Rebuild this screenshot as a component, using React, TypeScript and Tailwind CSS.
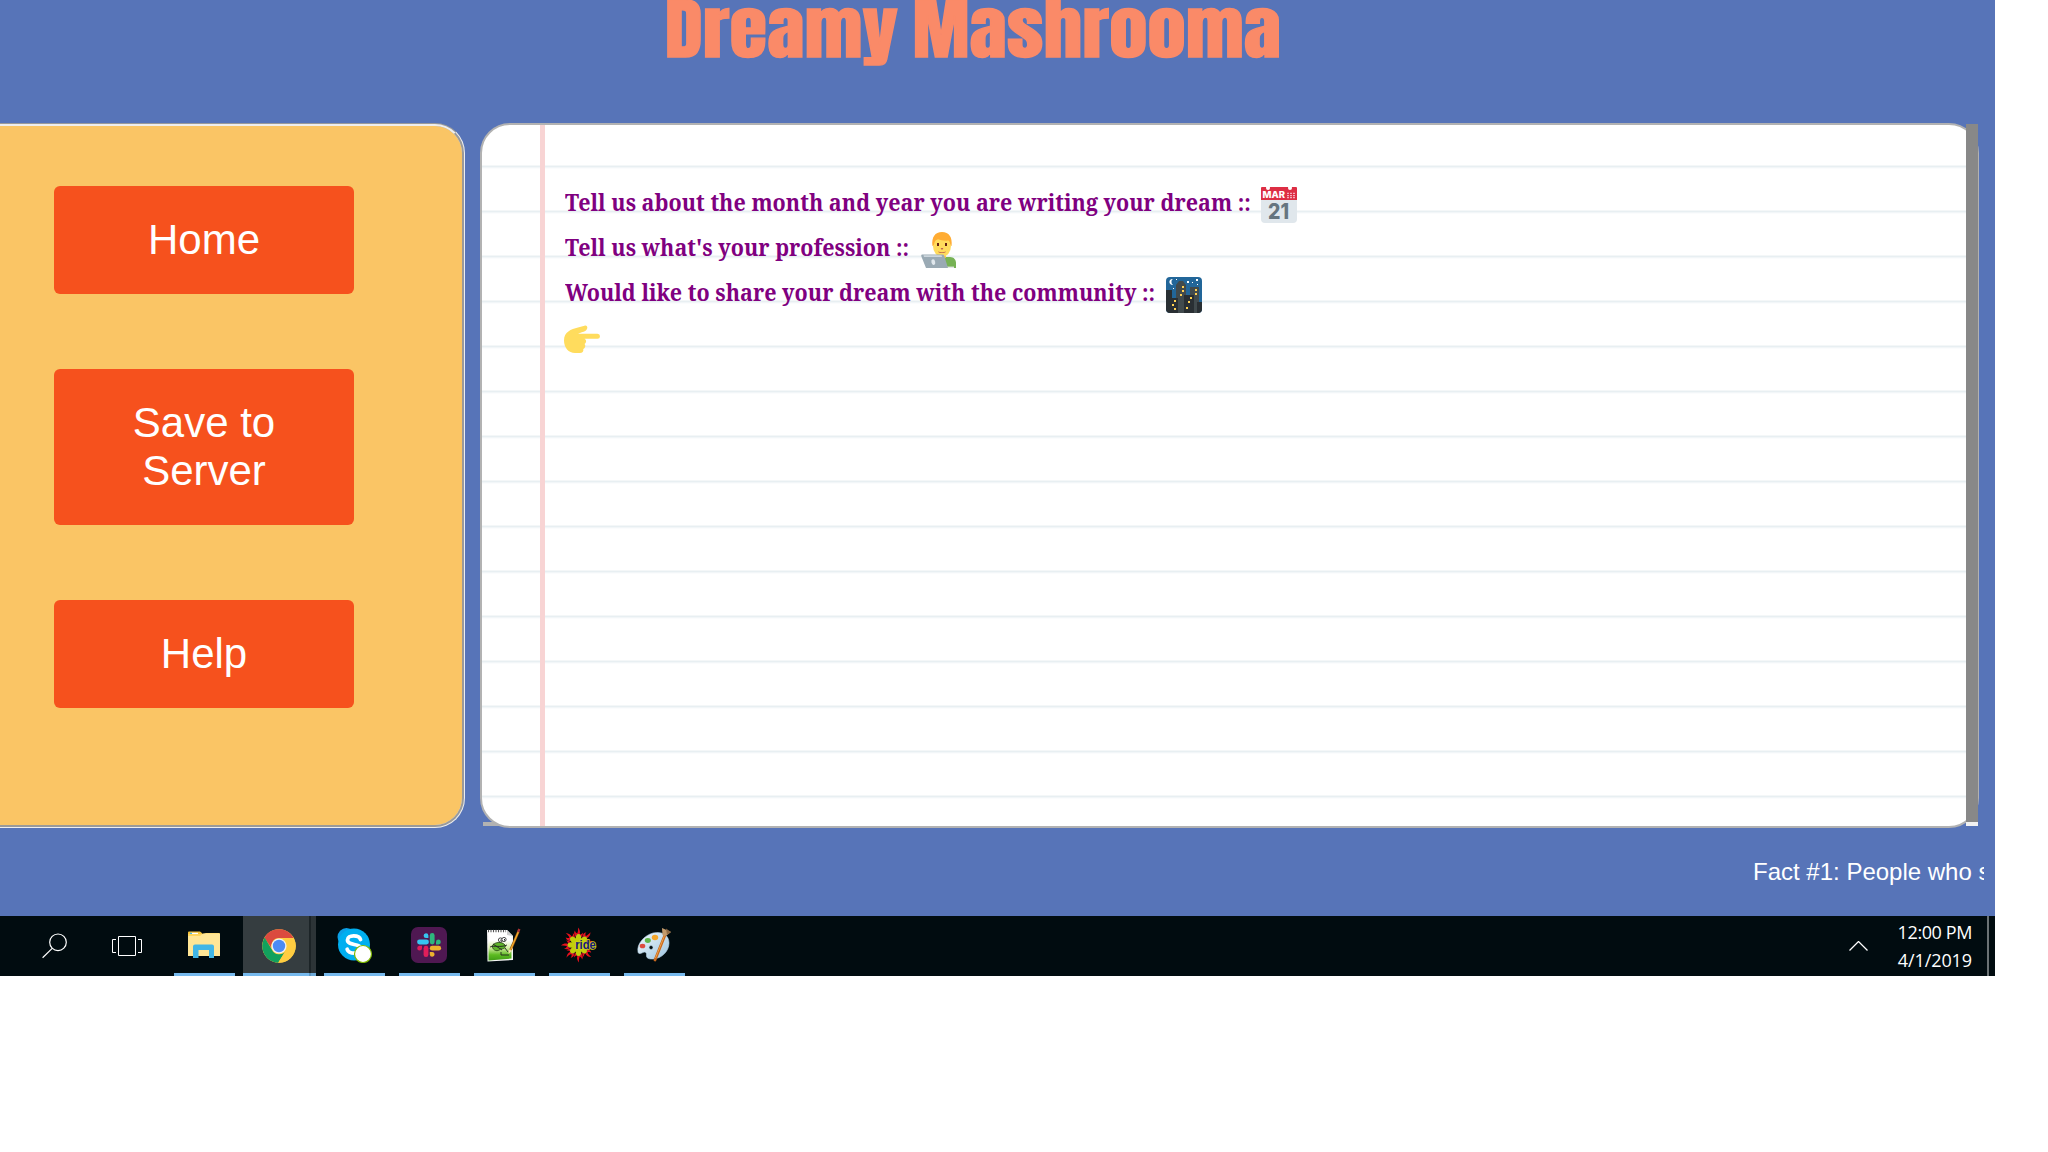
import type { ReactNode } from 'react';

function MenuButton({ children }: { children: ReactNode }) {
  return (
    <button className="w-[300px] rounded-[6px] bg-[#f6511d] px-[60px] py-[30px] text-center font-['Liberation_Sans',Arial,sans-serif] text-[42px] leading-[48px] text-white">
      {children}
    </button>
  );
}

function Calendar() {
  return (
    <svg viewBox="0 0 36 36" className="size-9 shrink-0">
      <path fill="#e0e7ec" d="M0 11h36v21a4 4 0 0 1-4 4H4a4 4 0 0 1-4-4z" />
      <path fill="#dd2e44" d="M1 0h34a1 1 0 0 1 1 1v12H0V1a1 1 0 0 1 1-1z" />
      <circle cx="7" cy="1" r="2" fill="#fff" />
      <circle cx="29" cy="1" r="2" fill="#fff" />
      <path fill="#f4abba" d="M26 5.700h2v1.300h-2zM29 5.700h2v1.300h-2zM32 5.700h2v1.300h-2zM26 8h2v1.300h-2zM29 8h2v1.300h-2zM32 8h2v1.300h-2zM26 10h2v1.200h-2zM29 10h2v1.200h-2zM32 10h2v1.200h-2z" />
      <text x="1.6" y="11.4" fontFamily="Inter, sans-serif" fontWeight="800" fontSize="9.6" textLength="22.5" lengthAdjust="spacingAndGlyphs" fill="#fff">MAR</text>
      <text x="7" y="32" fontFamily="Inter, sans-serif" fontWeight="800" fontSize="21.5" textLength="21" lengthAdjust="spacingAndGlyphs" fill="#66757f">21</text>
    </svg>
  );
}

function Technologist() {
  return (
    <svg viewBox="0 0 36 36" className="size-9 shrink-0">
      <path fill="#77b255" d="M17 36v-6c0-3 2-5 5-5h7c4 0 6 3 6 6v5z" />
      <path fill="#e6e7e8" d="M26 34.600h7V36h-7z" />
      <path fill="#ffcc4d" d="M17 21h8v4c-1 3-7 3-8 0z" />
      <ellipse cx="21" cy="14" rx="9" ry="11" fill="#ffdc5d" />
      <path fill="#ffac33" d="M11.400 14C10.500 5 14 0 21 0s10.500 5 9.600 14c-1.500-.5-1.500-4.500-3-5.500-4.600.5-7.600-.5-10.600-1.200-1.500.7-3 1.200-3.500 3.200-.3 1.500-.6 3-2.100 3.500z" />
      <path fill="#662113" d="M16 11h2v3h-2zM24 11h2v3h-2z" />
      <path fill="#c1694f" d="M19.700 16h2.600l-.5 1.500h-1.600zM17 19.500c2.500 1 5.500 1 8 0-.6 2-7.400 2-8 0z" />
      <path fill="#9aaab4" d="M1.500 22.500h20c1 0 1.500.5 1.800 1.500L27 36H5L.3 24.300c-.3-1 .2-1.800 1.200-1.800z" />
      <path fill="#ccd6dd" d="M2.500 23.300h18l.6 1.700H3z" />
      <ellipse cx="12.300" cy="30.200" rx="1.900" ry="2.900" transform="rotate(-12 12.300 30.200)" fill="#e1e8ed" />
    </svg>
  );
}

function NightCity() {
  return (
    <svg viewBox="0 0 36 36" className="size-9 shrink-0">
      <clipPath id="city"><rect width="36" height="36" rx="4" /></clipPath>
      <g clipPath="url(#city)">
        <path fill="#226699" d="M0 0h36v36H0z" />
        <path fill="#292f33" d="M0 13h6v8h6v15H0z" />
        <path fill="#414a4d" d="M10 8l3-4h4l3 4v28h-8V21h-2z" />
        <path fill="#414a4d" d="M24 10h9v26h-9z" />
        <path fill="#292f33" d="M18 18h10v18H18zM31 25h5v11h-5z" />
        <path fill="#ffd152" d="M16 9h2v2h-2zM16 13h2v2h-2zM14 17h2v2h-2zM29 12h2v2h-2zM29 16h2v2h-2zM24 20h2v2h-2zM22 24h2v2h-2zM20 30h2v2h-2zM8 23h2v2H8zM6 27h2v2H6zM8 31h2v2H8z" />
        <path fill="#fff" d="M6.800 2A3 3 0 1 0 7 7.900 3.700 3.700 0 0 1 6.800 2z" />
        <path fill="#fff" d="M10 2h1v1h-1zM21 4h2v2h-2zM26 5h1v1h-1zM30 2h2v2h-2zM31 7h1v1h-1zM7 11h1v1H7z" />
      </g>
    </svg>
  );
}

function PointingHand() {
  return (
    <svg viewBox="0 0 36 36" className="mb-[2px] size-9 shrink-0">
      <path fill="#ffdc5d" d="M0 19.500C0 11 7 8 14 6.500l6.500-1.800c2-.5 3.500 1 2.600 3-.7 1.800-2.600 2.700-5.300 3.600L14 12.800h19.500a2.500 2.500 0 0 1 0 5H20.500c1.600.8 2 2.500 1.300 3.700-.3.700-1 1.200-1.300 1.500 1 1 1 2.700.2 3.700-.4.600-.9 1-1.400 1.200.5 2.400-1 4.100-3.300 4.100h-5C4.500 32 0 26.500 0 19.500z" />
    </svg>
  );
}

function Question({ width, text, children }: { width: string; text: string; children: ReactNode }) {
  return (
    <div className="flex h-[45px] items-center">
      <div className={`mb-[5px] ml-px ${width}`}>
        <span className="inline-block origin-left scale-x-[0.936] font-['Noto_Serif','Caladea',serif] text-[23px] leading-[28px] font-bold whitespace-nowrap text-[#800080]">
          {text}
        </span>
      </div>
      {children}
    </div>
  );
}

function Notebook() {
  return (
    <section className="relative h-[705px] w-[1499px]">
      <div className="h-full overflow-hidden rounded-[30px] border-2 border-[#b2b2b2] bg-white bg-[linear-gradient(#fff_40px,#f4f7f8_40px,#f4f7f8_41px,#e8eff2_41px,#e8eff2_42px,#f2f6f8_42px,#f2f6f8_43px,#fbfcfd_43px,#fbfcfd_44px,#fff_44px)] bg-[length:100%_45px]">
        <div className="ml-[58px] h-full border-l-[5px] border-[#f8d4d4] pt-[57px] pl-[19px]">
          <Question width="w-[696px]" text="Tell us about the month and year you are writing your dream ::"><Calendar /></Question>
          <Question width="w-[356px]" text="Tell us what's your profession ::"><Technologist /></Question>
          <Question width="w-[601px]" text="Would like to share your dream with the community ::"><NightCity /></Question>
          <div className="flex h-[45px] items-center"><PointingHand /></div>
        </div>
      </div>
      <div className="absolute bottom-[2px] left-[3px] -z-10 h-1 w-6 bg-[#b2b2b2]" />
      <div className="absolute top-px right-px h-[702px] w-3 border-b-4 border-[#f1f1f1] bg-[#888]" />
    </section>
  );
}

function SearchIcon() {
  return (
    <svg viewBox="0 0 26 26" className="h-[26px] w-[26px]" fill="none" stroke="#fff" strokeWidth="1.200">
      <circle cx="16" cy="9.300" r="8.300" />
      <path d="M10.200 15.400L.6 24.800" />
    </svg>
  );
}

function TaskViewIcon() {
  return (
    <svg viewBox="0 0 30 20" className="h-5 w-[30px]" fill="none" stroke="#fff">
      <path d="M6.500.5h17v19h-17zM4 3.500H.5v13H4M26 3.500h3.500v13H26" />
    </svg>
  );
}

function ExplorerIcon() {
  return (
    <svg viewBox="0 0 32 27" className="mr-px h-[27px] w-8">
      <path fill="#f5c33b" d="M0 1.500Q0 .5 1 .5h11l2.500 2v4H0z" />
      <path fill="#ffd75e" d="M0 3h15l3-1h13q1 0 1 1v3H0z" />
      <path fill="#ffe696" d="M0 5h12l3-2.500h16q1 0 1 1V25H0z" />
      <path fill="#fff" d="M3 1.800h7v1.200H3z" />
      <path fill="#41b6e6" d="M2 1.800h2v1.200H2zM5 15.500Q5 13.500 7 13.500h17q2 0 2 2V27h-5v-8H10.500v8H5z" />
    </svg>
  );
}

function ChromeIcon() {
  return (
    <svg viewBox="0 0 34 34" className="size-[34px]">
      <circle cx="17" cy="17" r="16.800" fill="#ffcd41" />
      <path fill="#db4a3f" d="M2.400 8.700A16.800 16.800 0 0 1 31.600 9H17a8 8 0 0 0-7.600 10z" />
      <path fill="#12a15d" d="M2.600 8.400A16.800 16.800 0 0 0 16.200 33.800L24 21.500a8 8 0 0 1-14.200-1z" />
      <path fill="#ffcd41" d="M17 9h14.600A16.800 16.800 0 0 1 16.200 33.800L24 21z" />
      <circle cx="17" cy="17" r="7.600" fill="#f1f1f1" />
      <circle cx="17" cy="17" r="6.200" fill="#4b8bf4" />
    </svg>
  );
}

function SkypeIcon() {
  return (
    <svg viewBox="0 0 36 36" className="size-9">
      <circle cx="9.500" cy="10" r="9" fill="#0b9fe6" />
      <circle cx="25" cy="25" r="8" fill="#0b9fe6" />
      <circle cx="17" cy="17.500" r="16" fill="#00aff0" />
      <path d="M23.500 12.500C22 7.500 10.500 7.500 10.500 13c0 6 13.500 3 13.500 9 0 5.500-12 5.500-13.800.3" fill="none" stroke="#fff" strokeWidth="3.800" strokeLinecap="round" />
      <circle cx="26" cy="27" r="8.500" fill="#fff" stroke="#7fba00" strokeWidth="1.200" />
    </svg>
  );
}

function SlackIcon() {
  return (
    <svg viewBox="0 0 36 36" className="mr-px size-9">
      <rect width="36" height="36" rx="7" fill="#4f1852" />
      <g strokeWidth="4.800" strokeLinecap="round">
        <path stroke="#36c5f0" d="M8.500 15h7" />
        <path stroke="#2eb67d" d="M21.200 8.500v6.500" />
        <path stroke="#ecb22e" d="M21.200 21.200h6.500" />
        <path stroke="#e01e5a" d="M15 21.200v6.500" />
      </g>
      <path fill="#36c5f0" d="M17.400 11H15a2.400 2.400 0 1 1 2.400-2.500z" />
      <path fill="#2eb67d" d="M25 17.400V15a2.400 2.400 0 1 1 2.500 2.400z" />
      <path fill="#ecb22e" d="M18.800 25h2.400a2.400 2.400 0 1 1-2.400 2.500z" />
      <path fill="#e01e5a" d="M11 18.800v2.400a2.400 2.400 0 1 1-2.500-2.400z" />
    </svg>
  );
}

function NotepadIcon() {
  return (
    <svg viewBox="0 0 36 36" className="mr-px size-9">
      <linearGradient id="pad" x2="0" y2="1">
        <stop offset=".3" stopColor="#fff" />
        <stop offset=".55" stopColor="#d8efa8" />
        <stop offset=".8" stopColor="#5dbb22" />
        <stop offset="1" stopColor="#3f9d15" />
      </linearGradient>
      <path fill="#f5f5f5" d="M1 3h20l6 6v24L1.500 34.500z" />
      <path fill="url(#pad)" d="M2.500 5h18l5 5v21.500l-23 2z" />
      <path fill="#ccc" d="M21 3l6 6-6-1z" />
      <path stroke="#555" strokeDasharray="1 1.500" strokeWidth="2.500" d="M2 4h18" />
      <path fill="#5fb52a" stroke="#234010" strokeWidth=".8" d="M6 19c2-4 10-5 13-1 1.500 3-2 4-4.500 4C12 25 7 24 6 19z" />
      <path fill="none" stroke="#222" strokeWidth=".9" d="M4 20c5-2 10 1 17-2M7 17l9 6M15 25v3h8M19 21l3 4" />
      <circle cx="14.500" cy="13" r="2.100" fill="#fff" stroke="#222" strokeWidth=".8" />
      <circle cx="18" cy="12.500" r="2.100" fill="#fff" stroke="#222" strokeWidth=".8" />
      <path fill="#222" d="M14.500 12.500h1v1.500h-1zM18 12h1v1.500h-1z" />
      <path stroke="#8a5210" strokeWidth="2.600" d="M24.500 23L32.500 4.500" />
      <path stroke="#f2a62a" strokeWidth="1.500" d="M24.500 23L32.500 4.500" />
      <path stroke="#a33" strokeWidth="2.400" d="M32 5l1.400-3" />
      <path fill="#f6ddb0" d="M23 22.500l3 1.200L22.500 27z" />
    </svg>
  );
}

const RAYS = [0, 45, 90, 135, 180, 225, 270, 315];

function RideIcon() {
  return (
    <svg viewBox="0 0 36 36" className="mr-px size-9">
      {RAYS.map((a) => (
        <g key={a} transform={`rotate(${a} 17.500 18)`}>
          <path fill="#e8101c" d="M15 10C12.500 7 13 5 14 3.500c.2 2 1.200 2.500 2.200 3 .8-1.500 1-3.500.8-6C19 3 19.500 5 18.500 7.500c1.500 0 2.500-.5 3.500-2 0 2.500-.8 4-2.500 5z" />
          <path fill="#22229a" d="M15.500 10l-.8-2.500 1.800.8 1.300-1.800.4 2.200 1.800-.6-.8 2.400z" />
        </g>
      ))}
      {RAYS.map((a) => (
        <ellipse key={a} cx="17.500" cy="11.500" rx="2.800" ry="4.500" fill="#c3cf0a" transform={`rotate(${a} 17.500 18)`} />
      ))}
      <circle cx="17.500" cy="18" r="6" fill="#c3cf0a" />
      <text x="14.200" y="21.700" fontFamily="Liberation Sans, sans-serif" fontWeight="700" fontSize="12" textLength="20.500" lengthAdjust="spacingAndGlyphs" fill="#15157c" stroke="#cdd21c" strokeWidth="1.600" paintOrder="stroke">ride</text>
    </svg>
  );
}

function PaintIcon() {
  return (
    <svg viewBox="0 0 36 36" className="mr-px size-9">
      <linearGradient id="palette" x2="1" y2="1">
        <stop offset="0" stopColor="#f2f9fd" />
        <stop offset="1" stopColor="#9cc4e0" />
      </linearGradient>
      <path fill="url(#palette)" stroke="#b5d3e6" strokeWidth=".6" fillRule="evenodd" d="M2 25C.5 17 8 8.500 17 6c9-2 16 2 16 10S26 31.500 17 32c-4.500.2-7-1-6.500-4 .3-2.500-1.500-3.500-3.500-2.500-2 .9-4.500 2-5-.5zM15 18.500a2 2 0 1 0 .1 4 2 2 0 0 0-.1-4z" />
      <ellipse cx="6.500" cy="19" rx="2.800" ry="2.300" fill="#dc4b3e" />
      <ellipse cx="11.800" cy="13.500" rx="3" ry="2.400" fill="#5fb548" />
      <ellipse cx="19" cy="10.500" rx="3.200" ry="2.800" fill="#f3a62b" />
      <path stroke="#c8681e" strokeWidth="2.800" strokeLinecap="round" d="M29 8L19 33" />
      <path stroke="#eea24c" strokeWidth="1" d="M28.500 8.500L19.500 31" />
      <path fill="#c39a6b" d="M26 1l9 4-4.500 3.500L28.500 9l-2-1z" />
      <path fill="#8f6a44" d="M30 1.500l5 3.500-4 3z" />
    </svg>
  );
}

function Task({ children }: { children: ReactNode }) {
  return (
    <div className="flex h-[60px] w-[61px] items-center justify-center border-b-[3px] border-[#76b9ed]">{children}</div>
  );
}

function Taskbar() {
  return (
    <footer className="flex h-[60px] bg-[#010c10] text-white">
      <div className="flex items-center pl-[42px]"><SearchIcon /></div>
      <div className="flex items-center pl-[44px]"><TaskViewIcon /></div>
      <div className="ml-8"><Task><ExplorerIcon /></Task></div>
      <div className="ml-2 flex">
        <div className="flex w-[66px] justify-center border-b-[3px] border-[#76b9ed] bg-[#353d40] pt-[13px] pl-[6px]"><ChromeIcon /></div>
        <div className="w-[2px] border-b-[3px] border-[#5f95be] bg-[#1c2427]" />
        <div className="w-[5px] border-b-[3px] border-[#6ca9d8] bg-[#2c3437]" />
      </div>
      <div className="ml-2 flex gap-[14px]">
        <Task><SkypeIcon /></Task>
        <Task><SlackIcon /></Task>
        <Task><NotepadIcon /></Task>
        <Task><RideIcon /></Task>
        <Task><PaintIcon /></Task>
      </div>
      <div className="ml-auto flex items-center">
        <svg viewBox="0 0 19 10" className="mr-[24px] h-[10px] w-[19px]" fill="none" stroke="#fff" strokeWidth="1.300">
          <path d="M.5 9.500l9-9 9 9" />
        </svg>
        <div className="mr-[15px] w-[80px] text-right font-['Open_Sans',sans-serif] text-[18px] leading-[28px] whitespace-nowrap">
          <div className="tracking-[-0.4px]">12:00 PM</div>
          <div className="tracking-[-0.1px]">4/1/2019</div>
        </div>
        <div className="mr-[6px] h-[60px] w-[2px] bg-[#6b7274]" />
      </div>
    </footer>
  );
}

export default function App() {
  return (
    <div className="h-[1152px] w-[2048px] overflow-hidden bg-white">
      <div className="isolate flex h-[976px] w-[1995px] flex-col bg-[#5774b8]">
        <header className="h-[123px] overflow-hidden pl-[665px]">
          <h1 className="-mt-[21px] w-[620px] origin-center scale-y-[0.87] font-['Anton',Impact,sans-serif] text-[76px] leading-[100px] font-normal tracking-[0.5px] whitespace-nowrap text-[#fa8a68] [-webkit-text-stroke:1.5px_#fa8a68] [word-spacing:-4px]">
            Dreamy Mashrooma
          </h1>
        </header>
        <main className="flex h-[705px] gap-[15px]">
          <nav className="flex w-[465px] flex-col gap-[75px] rounded-r-[30px] border-[3px] border-l-0 border-[#eeeeee] bg-[#fac565] pt-[60px] pl-[54px] [border-style:groove]">
            <MenuButton>Home</MenuButton>
            <MenuButton>Save to Server</MenuButton>
            <MenuButton>Help</MenuButton>
          </nav>
          <Notebook />
        </main>
        <div className="flex flex-1 justify-end pr-[11px]">
          <div className="w-[231px] overflow-hidden pt-[29px] font-['Liberation_Sans',Arial,sans-serif] text-[24px] leading-[30px] whitespace-nowrap text-white">
            Fact #1: People who s
          </div>
        </div>
        <Taskbar />
      </div>
    </div>
  );
}
